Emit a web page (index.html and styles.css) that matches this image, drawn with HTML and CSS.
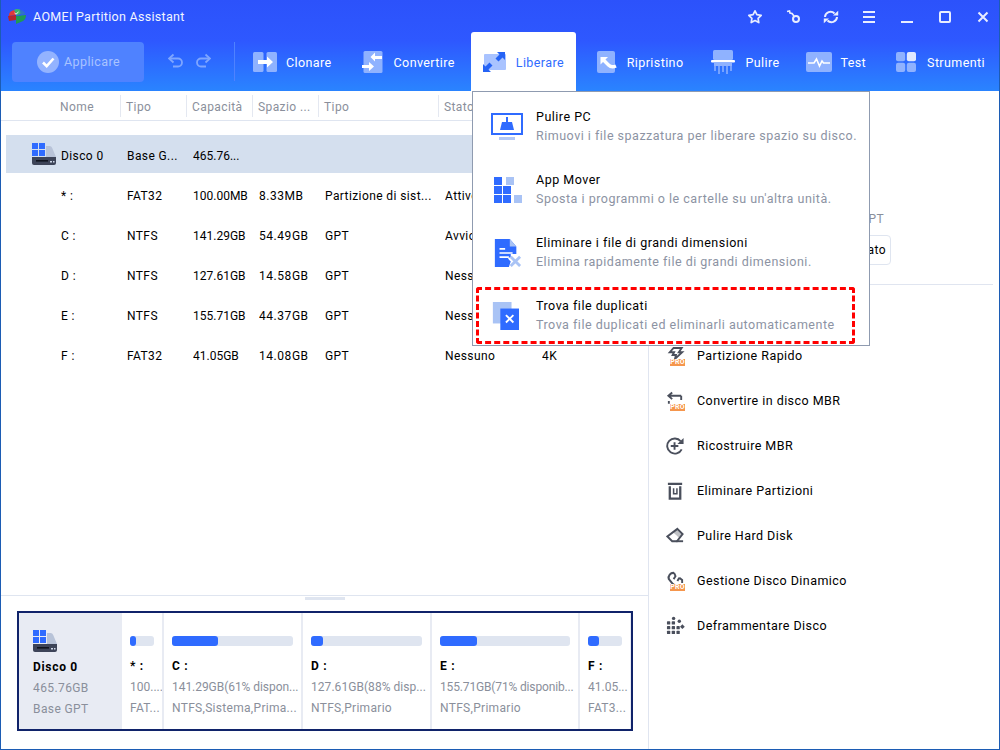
FILE: index.html
```html
<!DOCTYPE html>
<html lang="it">
<head>
<meta charset="utf-8">
<title>AOMEI Partition Assistant</title>
<link rel="stylesheet" href="styles.css">
</head>
<body>
<svg class="defs" width="0" height="0">
  <symbol id="disk" viewBox="0 0 24 22">
    <path d="M14 3h3.500q2 0 2.700 2l3.800 9H14z" fill="#b8c3d8"/>
    <path d="M0 14h24v6q0 2-2 2H2q-2 0-2-2z" fill="#3d4458"/>
    <rect x="4" y="17" width="12" height="1.600" fill="#10141f"/>
    <rect x="18" y="18" width="2" height="1.500" fill="#cfd8e8"/>
    <rect x="21" y="18" width="1.500" height="1.500" fill="#cfd8e8"/>
    <rect x="0" y="0" width="6" height="6" fill="#2f6bff"/>
    <rect x="7" y="0" width="6" height="6" fill="#2f6bff"/>
    <rect x="0" y="7" width="6" height="6" fill="#2f6bff"/>
    <rect x="7" y="7" width="6" height="6" fill="#2f6bff"/>
  </symbol>
</svg>

<div class="app">
  <header class="head">
    <div class="titlebar">
      <svg class="logo" viewBox="0 0 18 16">
        <path d="M1 5q1-3 5-4l3 3-2 2-6 1z" fill="#e03a3a"/>
        <path d="M0 7l8-1v5l-7 1z" fill="#b5262e"/>
        <path d="M6 1q2-1.500 6-.5l1 4-4 2z" fill="#3bb56c"/>
        <path d="M12 .5q4 1 5.500 4.500L13 6z" fill="#2f72c8"/>
        <path d="M8 7l10-1q0 4-3 6l-7 3z" fill="#1f9a55"/>
        <path d="M6.500 4 8 5.200 10.500 3" fill="none" stroke="#fff" stroke-width=".9"/>
      </svg>
      <span class="apptitle">AOMEI Partition Assistant</span>
      <div class="winbtns">
        <svg class="wi" viewBox="0 0 16 16"><path d="M8 1.800l1.900 3.900 4.300.6-3.100 3 .7 4.300L8 11.600l-3.800 2 .7-4.300-3.100-3 4.300-.6z" fill="none" stroke="#e8edff" stroke-width="1.700" stroke-linejoin="round"/></svg>
        <svg class="wi" viewBox="0 0 16 16"><path d="M2 2.500 4.500 2 5 4l2 .5L9 7" fill="none" stroke="#e8edff" stroke-width="1.700"/><circle cx="11" cy="10" r="3" fill="none" stroke="#e8edff" stroke-width="2"/></svg>
        <svg class="wi" viewBox="0 0 16 16"><path d="M2 8a5.500 5.500 0 0 1 9.500-3.500M14 8a5.500 5.500 0 0 1-9.500 3.500" fill="none" stroke="#e8edff" stroke-width="2"/><path d="M10 6.500h5.200V1.800zM6 9.500H.8v4.700z" fill="#e8edff"/></svg>
        <svg class="wi" viewBox="0 0 16 16"><path d="M2 3h12M2 8h12M2 13h12" stroke="#e8edff" stroke-width="2"/></svg>
        <svg class="wi" viewBox="0 0 16 16"><path d="M2 13h12" stroke="#e8edff" stroke-width="2"/></svg>
        <svg class="wi" viewBox="0 0 16 16"><rect x="3" y="3" width="10" height="10" rx="1" fill="none" stroke="#e8edff" stroke-width="2"/></svg>
        <svg class="wi" viewBox="0 0 16 16"><path d="M3.500 3.500l9 9M12.500 3.500l-9 9" stroke="#e8edff" stroke-width="2"/></svg>
      </div>
    </div>
    <div class="toolbar">
      <div class="apply">
        <svg class="ico22" viewBox="0 0 22 22"><circle cx="11" cy="11" r="11" fill="#a9c3ff" fill-opacity=".75"/><path d="M6 11.500l3.700 3.700L16.500 7.500" fill="none" stroke="#fff" stroke-width="2.600"/></svg>
        <span>Applicare</span>
      </div>
      <div class="undo">
        <svg class="ico16" viewBox="0 0 16 16"><path d="M2 5.500h8a4 4 0 0 1 0 8H5" fill="none" stroke="#7fa6ff" stroke-width="1.800"/><path d="M5.500 1.500 1 5.500l4.500 4" fill="none" stroke="#7fa6ff" stroke-width="1.800"/></svg>
        <svg class="ico16" viewBox="0 0 16 16"><path d="M14 5.500H6a4 4 0 0 0 0 8h5" fill="none" stroke="#7fa6ff" stroke-width="1.800"/><path d="M10.500 1.500 15 5.500l-4.500 4" fill="none" stroke="#7fa6ff" stroke-width="1.800"/></svg>
      </div>
      <div class="vsep"></div>
      <div class="tool clonare">
        <svg class="ico24" viewBox="0 0 24 20"><rect width="10.500" height="20" rx="1.500" fill="#8fb2ff"/><rect x="13.500" width="10.500" height="20" rx="1.500" fill="#8fb2ff"/><path d="M5 8h9V4.500l6 5.500-6 5.500V12H5z" fill="#fff"/></svg>
        <span>Clonare</span>
      </div>
      <div class="tool convertire">
        <svg class="ico24 tall" viewBox="0 0 24 22"><rect x="1.500" width="19" height="22" rx="1.500" fill="#8fb2ff"/><path d="M20 5h-7V1.500L8.500 6l4.500 4.500V8h7zM0 14h7v-3l5 4.500L7 20v-3H0z" fill="#fff"/></svg>
        <span>Convertire</span>
      </div>
      <div class="tool tab">
        <svg class="ico24" viewBox="0 0 24 20"><rect x="1" y="2" width="22" height="16" rx="1" fill="#a9c3ff"/><path d="M0 20v-8l2.500 2.500 4-4 3 3-4 4L8 20zM22 0v8l-2.500-2.500-4 4-3-3 4-4L14 0z" fill="#2563f5"/></svg>
        <span>Liberare</span>
      </div>
      <div class="tool ripristino">
        <svg class="ico20 tall22" viewBox="0 0 20 22"><rect width="18" height="22" rx="2" fill="#8fb2ff"/><path d="M3.500 6h7.500L3.500 13.500z" fill="#fff"/><path d="M6 8.500l5.500 5.500q3 3 7.500 1" fill="none" stroke="#fff" stroke-width="3.400"/></svg>
        <span>Ripristino</span>
      </div>
      <div class="tool pulire">
        <svg class="ico24 shred" viewBox="0 0 24 24"><rect x="2" width="20" height="10" rx="1.500" fill="#8fb2ff"/><rect y="10" width="24" height="2.500" rx="1" fill="#fff"/><path d="M3 12.500h18V16H3z" fill="#8fb2ff"/><path d="M4 14v7M8 14v10M12 14v8M16 14v10M20 14v7" stroke="#8fb2ff" stroke-width="1.500"/></svg>
        <span>Pulire</span>
      </div>
      <div class="tool testt">
        <svg class="ico26" viewBox="0 0 26 20"><rect width="26" height="20" rx="2" fill="#8fb2ff"/><path d="M2 11h6l2.500-4 3 7 2.500-5 1.500 2H24" fill="none" stroke="#fff" stroke-width="1.600"/></svg>
        <span>Test</span>
      </div>
      <div class="tool strumenti">
        <svg class="ico20" viewBox="0 0 20 20"><rect width="9.200" height="9.200" rx="2" fill="#8fb2ff"/><rect x="10.800" width="9.200" height="9.200" rx="2" fill="#dfe8ff"/><rect y="10.800" width="9.200" height="9.200" rx="2" fill="#8fb2ff"/><rect x="10.800" y="10.800" width="9.200" height="9.200" rx="2" fill="#8fb2ff"/></svg>
        <span>Strumenti</span>
      </div>
    </div>
  </header>

  <main class="main">
    <section class="left">
      <div class="thead">
        <span>Nome</span><span>Tipo</span><span>Capacità</span><span>Spazio ...</span><span>Tipo</span><span>Stato</span>
      </div>
      <div class="tbody">
        <div class="row sel"><span class="c0"><svg class="diskicon"><use href="#disk"/></svg></span><span>Disco 0</span><span>Base G...</span><span>465.76...</span><span></span><span></span><span></span><span></span></div>
        <div class="row"><span class="c0"></span><span>* :</span><span>FAT32</span><span>100.00MB</span><span>8.33MB</span><span>Partizione di sist...</span><span>Attivo</span><span></span></div>
        <div class="row"><span class="c0"></span><span>C :</span><span>NTFS</span><span>141.29GB</span><span>54.49GB</span><span>GPT</span><span>Avvio</span><span></span></div>
        <div class="row"><span class="c0"></span><span>D :</span><span>NTFS</span><span>127.61GB</span><span>14.58GB</span><span>GPT</span><span>Nessuno</span><span></span></div>
        <div class="row"><span class="c0"></span><span>E :</span><span>NTFS</span><span>155.71GB</span><span>44.37GB</span><span>GPT</span><span>Nessuno</span><span></span></div>
        <div class="row"><span class="c0"></span><span>F :</span><span>FAT32</span><span>41.05GB</span><span>14.08GB</span><span>GPT</span><span>Nessuno</span><span>4K</span></div>
      </div>
      <div class="splitter"><i></i></div>
      <div class="diskmap">
        <div class="dm-head">
          <svg class="dm-icon"><use href="#disk"/></svg>
          <b>Disco 0</b>
          <span>465.76GB</span>
          <span>Base GPT</span>
        </div>
        <div class="dm-part w1"><div class="bar"><i class="f1"></i></div><b>* :</b><span>100....</span><span>FAT...</span></div>
        <div class="dm-part w2"><div class="bar"><i class="f2"></i></div><b>C :</b><span>141.29GB(61% dispon...</span><span>NTFS,Sistema,Prima...</span></div>
        <div class="dm-part w3"><div class="bar"><i class="f3"></i></div><b>D :</b><span>127.61GB(88% disp...</span><span>NTFS,Primario</span></div>
        <div class="dm-part w4"><div class="bar"><i class="f4"></i></div><b>E :</b><span>155.71GB(71% disponib...</span><span>NTFS,Primario</span></div>
        <div class="dm-part w5"><div class="bar"><i class="f5"></i></div><b>F :</b><span>41.05...</span><span>FAT3...</span></div>
      </div>
    </section>

    <aside class="right">
      <div class="info">
        <span class="info-t">GPT</span>
        <span class="info-b">Formato</span>
      </div>
      <div class="rdiv"></div>
      <ul class="ops">
        <li class="hiddenrow"></li>
        <li><span class="opi"><svg viewBox="0 0 20 20"><path d="M8 1.500h8.500l-3 4.500H17L9.500 13l1-4H7l1.500-3H4z" fill="none" stroke="#4a4f5c" stroke-width="2"/></svg><span class="pro">PRO</span></span>Partizione Rapido</li>
        <li><span class="opi"><svg viewBox="0 0 20 20"><path d="M16 4.500H3M6.500 1 2.500 4.500 6.500 8M16 4.500V9M3 10v3" fill="none" stroke="#4a4f5c" stroke-width="2"/></svg><span class="pro">PRO</span></span>Convertire in disco MBR</li>
        <li><span class="opi"><svg viewBox="0 0 20 20"><path d="M16.500 13.500a8 8 0 1 1-1-8.500" fill="none" stroke="#4a4f5c" stroke-width="2"/><path d="M9 6v8M5 10h8" stroke="#4a4f5c" stroke-width="2"/><path d="M18.500 1.500V8H12z" fill="#4a4f5c"/></svg></span>Ricostruire MBR</li>
        <li><span class="opi"><svg viewBox="0 0 20 20"><path d="M2 2.500h15M4 5v13h11V5" fill="none" stroke="#4a4f5c" stroke-width="2.400"/><path d="M8 7v6h3.500V7" fill="none" stroke="#4a4f5c" stroke-width="1.600"/></svg></span>Eliminare Partizioni</li>
        <li><span class="opi"><svg viewBox="0 0 20 20"><path d="M12 2.500l5.500 5.500-6 7.500H6.500L1.500 10.500z" fill="none" stroke="#4a4f5c" stroke-width="2"/><path d="M11 15.500h7" stroke="#4a4f5c" stroke-width="2"/><path d="M12 2.500l5.500 5.500-3.500 4-6-5.500z" fill="#4a4f5c" fill-opacity=".35"/></svg></span>Pulire Hard Disk</li>
        <li><span class="opi"><svg viewBox="0 0 20 20"><path d="M8.500 1.500a5 5 0 0 0-5.500 6.500l4 5 4 3h6" fill="none" stroke="#4a4f5c" stroke-width="2.200"/><path d="M8.500 1.500 10 5l-2 3M14 6.500l-2 3.500M14 6.500l3 2.500v3" fill="none" stroke="#4a4f5c" stroke-width="2"/></svg><span class="pro">PRO</span></span>Gestione Disco Dinamico</li>
        <li><span class="opi"><svg viewBox="0 0 20 20"><g fill="#4a4f5c"><rect x="1" y="5" width="3.500" height="3.500" rx=".7"/><rect x="1" y="10" width="3.500" height="3.500" rx=".7"/><rect x="1" y="15" width="3.500" height="3.500" rx=".7"/><rect x="6" y="5" width="3.500" height="3.500" rx=".7"/><rect x="6" y="10" width="3.500" height="3.500" rx=".7"/><rect x="6" y="15" width="3.500" height="3.500" rx=".7"/><rect x="11" y="15" width="3.500" height="3.500" rx=".7"/><rect x="11" y="10" width="3.500" height="3.500" rx=".7"/><circle cx="8" cy="2" r="1.800"/><circle cx="14" cy="5" r="1.800"/><rect x="15.500" y="9" width="3.500" height="3.500" transform="rotate(45 17.250 10.750)"/></g></svg></span>Deframmentare Disco</li>
      </ul>
    </aside>
  </main>

  <div class="dropdown">
    <div class="dd-item">
      <svg class="dd-ico" viewBox="0 0 32 28"><rect x="1" y="1" width="30" height="20" fill="none" stroke="#2f6bff" stroke-width="2"/><rect x="8" y="24" width="16" height="3" fill="#b4c9f5"/><path d="M15 4h2v5h4l2 8H9l2-8h4z" fill="#2f6bff"/></svg>
      <div><b>Pulire PC</b><span>Rimuovi i file spazzatura per liberare spazio su disco.</span></div>
    </div>
    <div class="dd-item">
      <svg class="dd-ico" viewBox="0 0 32 28"><g fill="#2f6bff"><rect x="3" y="1" width="8" height="8"/><rect x="3" y="10" width="8" height="8"/><rect x="12" y="10" width="8" height="8"/><rect x="3" y="19" width="8" height="8"/><rect x="12" y="19" width="8" height="8"/></g><rect x="15" y="1" width="8" height="8" fill="#a9c3f5"/><rect x="23" y="19" width="8" height="8" fill="#a9c3f5"/></svg>
      <div><b>App Mover</b><span>Sposta i programmi o le cartelle su un'altra unità.</span></div>
    </div>
    <div class="dd-item">
      <svg class="dd-ico" viewBox="0 0 32 30"><path d="M3 0h16l7 8v8h-6v3l-3 2 3 3-2 6H3z" fill="#2f6bff"/><path d="M19 0l7 8h-7z" fill="#a9c3f5"/><path d="M8 10.500h6M8 15h14M8 19.500h10" stroke="#fff" stroke-width="1.800"/><path d="M20 19l10 10M30 19 20 29" stroke="#a9c3f5" stroke-width="3"/></svg>
      <div><b>Eliminare i file di grandi dimensioni</b><span>Elimina rapidamente file di grandi dimensioni.</span></div>
    </div>
    <div class="dd-item dup">
      <svg class="dd-ico" viewBox="0 0 32 30"><rect x="3" y="0" width="20" height="23" fill="#a9c3f5"/><rect x="11" y="7" width="20" height="23" fill="#2f6bff"/><path d="M17 14l8 8M25 14l-8 8" stroke="#fff" stroke-width="2"/></svg>
      <div><b>Trova file duplicati</b><span>Trova file duplicati ed eliminarli automaticamente</span></div>
    </div>
  </div>
</div>
</body>
</html>
```
FILE: styles.css
```css
* { box-sizing: border-box; }
html, body { margin: 0; padding: 0; }
body {
  width: 1000px;
  height: 750px;
  overflow: hidden;
  font-family: Roboto, "Liberation Sans", sans-serif;
  font-size: 12px;
  letter-spacing: .4px;
  color: #000;
  background: #fff;
}
.defs { position: absolute; }
.app {
  position: relative;
  width: 1000px;
  height: 750px;
  display: flex;
  flex-direction: column;
  border: 1px solid #1c5cb4;
  border-top: 0;
  overflow: hidden;
}

/* header */
.head {
  height: 91px;
  flex: none;
  margin: 0 -1px;
  background: linear-gradient(#2c52fb 0, #2e58ff 45%, #2a84ff 100%);
  color: #fff;
}
.titlebar {
  height: 33px;
  display: flex;
  align-items: center;
  padding-left: 8px;
}
.logo { width: 18px; height: 16px; }
.apptitle { margin-left: 7px; font-size: 12.500px; letter-spacing: .3px; color: #f2f5ff; }
.winbtns { margin-left: auto; margin-right: 9px; display: flex; gap: 22px; }
.wi { width: 16px; height: 16px; display: block; }

.toolbar { height: 58px; display: flex; align-items: flex-start; font-size: 12.500px; }
.apply {
  width: 132px;
  height: 40px;
  margin: 9px 0 0 12px;
  display: flex;
  align-items: center;
  padding: 0 0 1px 25px;
  gap: 5px;
  background: #4f82ff;
  border-radius: 4px;
  color: #a9c3ff;
}
.ico22 { width: 22px; height: 22px; }
.ico16 { width: 16px; height: 16px; display: block; }
.undo { display: flex; gap: 11px; margin: 20px 0 0 24px; }
.vsep { width: 1px; height: 39px; margin: 9px 0 0 23px; background: #4f82ff; }
.tool { display: flex; align-items: center; height: 58px; }
.tool svg { flex: none; }
.ico24 { width: 24px; height: 20px; }
.ico24.tall { height: 22px; }
.ico24.shred { height: 24px; }
.ico20 { width: 20px; height: 20px; }
.ico20.tall22 { height: 22px; }
.ico26 { width: 26px; height: 20px; }
.clonare { margin-left: 18px; gap: 9px; }
.convertire { margin-left: 30px; gap: 8px; }
.tab {
  width: 105px;
  height: 59px;
  margin: -1px 0 0 16px;
  padding: 1px 0 0 12px;
  gap: 9px;
  background: #fff;
  color: #2f6bff;
  border-radius: 3px 3px 0 0;
  position: relative;
  z-index: 2;
}
.ripristino { margin-left: 21px; gap: 10px; }
.pulire { margin-left: 28px; gap: 10px; }
.testt { margin-left: 27px; gap: 8px; }
.strumenti { margin-left: 30px; gap: 11px; }

/* main */
.main { flex: 1; display: flex; min-height: 0; }
.left { width: 647px; flex: none; display: flex; flex-direction: column; }
.thead {
  height: 30px;
  flex: none;
  padding-top: 1px;
  display: grid;
  grid-template-columns: 119px 66px 66px 66px 120px 1fr;
  align-items: center;
  border-bottom: 1px solid #dfe5f0;
  color: #8a8f9b;
}
.thead span {
  height: 22px;
  line-height: 24px;
  padding-left: 5px;
  border-left: 1px solid #e4e8f1;
}
.thead span:first-child { padding-left: 59px; border-left: 0; }
.tbody { padding: 14px 0 0 5px; display: flex; flex-direction: column; gap: 2px; }
.row {
  height: 38px;
  display: grid;
  grid-template-columns: 55px 66px 66px 66px 66px 120px 97px 1fr;
  align-items: center;
  white-space: nowrap;
}
.row span { padding-top: 3px; overflow: hidden; }
.row span:nth-child(4) { letter-spacing: 0; }
.row span:nth-child(5) { letter-spacing: .55px; }
.row span.c0 { padding-top: 0; }
.sel { background: #d4dfee; }
.c0 { display: flex; justify-content: flex-end; padding-right: 5px; }
.diskicon { width: 24px; height: 22px; display: block; }
.splitter { margin-top: auto; height: 16px; flex: none; border-top: 1px solid #dfe5f0; display: flex; justify-content: center; }
.splitter i { display: block; width: 40px; height: 3px; margin-top: 1px; background: #dfe5f0; }

.diskmap {
  flex: none;
  height: 120px;
  margin: 0 15px 18px 16px;
  display: flex;
  gap: 2px;
  background: #e8ebf3;
  border: 2px solid #10236a;
  white-space: nowrap;
}
.dm-head {
  width: 103px;
  margin-right: -2px;
  flex: none;
  background: #e8ebf3;
  padding: 17px 0 0 14px;
  display: flex;
  flex-direction: column;
  color: #8a8f9b;
}
.dm-icon { width: 24px; height: 22px; display: block; }
.dm-head b { color: #000; margin-top: 5px; height: 20px; line-height: 20px; letter-spacing: .7px; }
.dm-head span { height: 21px; line-height: 21px; }
.dm-head b + span { margin-top: 1px; }
.dm-part {
  flex: none;
  background: #fff;
  padding: 23px 0 0 8px;
  display: flex;
  flex-direction: column;
  overflow: hidden;
  color: #8a8f9b;
  letter-spacing: .3px;
}
.dm-part b { color: #000; margin-top: 10px; height: 20px; line-height: 20px; letter-spacing: .7px; }
.dm-part b + span { margin-top: 1px; }
.dm-part span { height: 21px; line-height: 21px; }
.w1 span:nth-of-type(1), .w5 span:nth-of-type(1) { letter-spacing: 0; }
.w2 span:nth-of-type(1) { letter-spacing: -.05px; }
.w3 span:nth-of-type(1) { letter-spacing: .05px; }
.w4 span:nth-of-type(1) { letter-spacing: -.15px; }
.w1 { width: 40px; }
.w2 { width: 137px; }
.w3 { width: 127px; }
.w4 { width: 146px; }
.w5 { width: 50px; }
.bar { height: 10px; margin-right: 8px; background: #dfe5f0; border-radius: 3px; flex: none; }
.bar i { display: block; height: 10px; background: #2f6bff; border-radius: 3px; }
.f1 { width: 6px; }
.f2 { width: 46px; }
.f3 { width: 12px; }
.f4 { width: 37px; }
.f5 { width: 11px; }

/* right panel */
.right { flex: 1; border-left: 1px solid #e0e5f0; display: flex; flex-direction: column; }
.info {
  height: 193px;
  flex: none;
  display: flex;
  flex-direction: column;
  align-items: flex-end;
  justify-content: flex-end;
  padding: 0 108px 19px 0;
  color: #8a8f9b;
}
.info-t { margin: 0 7px 8px 0; line-height: 16px; }
.info-b { height: 30px; line-height: 28px; padding: 0 4px 0 8px; border: 1px solid #dfe5f0; border-radius: 4px; color: #000; }
.rdiv { height: 1px; flex: none; margin: 0 6px 0 10px; background: #e0e5f0; }
.ops { list-style: none; margin: 3px 0 0; padding: 0 0 0 17px; font-size: 12.500px; letter-spacing: .45px; }
.ops li { height: 45px; display: flex; align-items: center; gap: 12px; }
.opi { width: 19px; height: 20px; position: relative; flex: none; }
.opi svg { display: block; width: 19px; height: 20px; }
.pro {
  position: absolute;
  left: 4px;
  top: 13px;
  width: 15px;
  height: 7px;
  background: #f5964d;
  color: #fff;
  font-size: 7px;
  font-weight: 700;
  line-height: 7px;
  letter-spacing: .3px;
  text-align: center;
}

/* dropdown */
.dropdown {
  position: absolute;
  left: 471px;
  top: 91px;
  width: 398px;
  height: 255px;
  background: #fff;
  border: 1px solid #8f9bb0;
  padding: 3px 14px 0 3px;
  display: flex;
  flex-direction: column;
  z-index: 1;
  font-size: 12.500px;
  letter-spacing: .5px;
}
.dd-item { height: 63px; flex: none; display: flex; align-items: center; gap: 13px; padding-left: 15px; }
.dd-item > div { display: flex; flex-direction: column; gap: 3px; white-space: nowrap; }
.dd-item b { font-weight: 400; color: #000; line-height: 16px; }
.dd-item span { color: #8c93a3; line-height: 16px; }
.dd-ico { width: 32px; height: 28px; flex: none; }
.dup {
  height: 57px;
  margin-top: 3px;
  padding-left: 10px;
  gap: 15px;
  border: 3px dashed #f00;
  border-radius: 3px;
}
```
